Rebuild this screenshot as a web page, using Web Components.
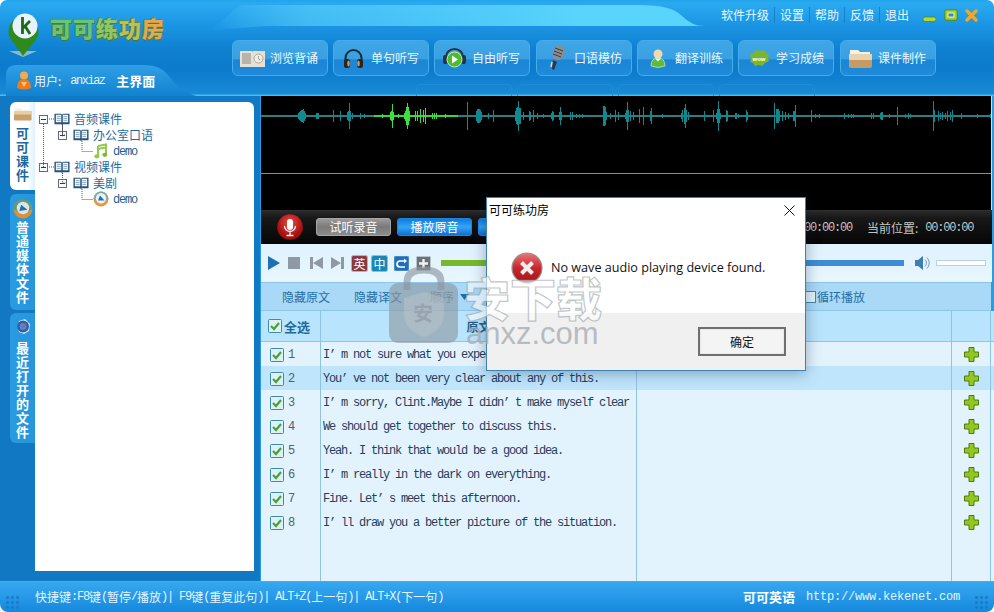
<!DOCTYPE html>
<html lang="zh"><head><meta charset="utf-8"><title>可可练功房</title>
<style>
html,body{margin:0;padding:0;background:#fff}
body{font:12px "Noto Sans CJK SC","Liberation Sans",sans-serif}
</style></head><body>
<kk-app></kk-app>
<script>
const ICONS={
 book:`<svg width="17" height="14" viewBox="0 0 17 14"><path d="M0.5 1.5h7l1 1 1-1h7v11h-7l-1 1-1-1h-7z" fill="#27527c"/><path d="M2 2.5h5.7v8H2zM9.3 2.5H15v8H9.3z" fill="#eef6fb"/><path d="M3 4.5h4M3 6.5h4M3 8.5h4M10 4.5h4M10 6.5h4M10 8.5h4" stroke="#8fa8bc" stroke-width="1"/></svg>`,
 minus:`<svg width="9" height="9" viewBox="0 0 9 9"><rect x=".5" y=".5" width="8" height="8" fill="#f8fbfe" stroke="#5f6e7c"/><path d="M2 4.5h5" stroke="#2c3a46"/></svg>`,
 note:`<svg width="14" height="16" viewBox="0 0 14 16"><path d="M4 3V13M12 1.5V11.500M4 3l8-1.500V4.500L4 6" fill="none" stroke="#93c94a" stroke-width="2"/><ellipse cx="2.800" cy="13.300" rx="2.500" ry="2.100" fill="#93c94a"/><ellipse cx="10.800" cy="11.800" rx="2.500" ry="2.100" fill="#7fb83a"/></svg>`,
 orb:`<svg width="16" height="16" viewBox="0 0 16 16"><circle cx="8" cy="8" r="7.500" fill="#e59a3a"/><path d="M.6 8a7.400 7.400 0 0 1 14.800 0 9 6 0 0 1-14.800 0" fill="#7ea9a8"/><circle cx="8" cy="7.200" r="5.200" fill="#e9f2f6"/><path d="M5 9.500 7 4.500l4.500 5z" fill="#2b6ea6"/></svg>`,
 orbBig:`<svg width="20" height="20" viewBox="0 0 16 16"><circle cx="8" cy="8" r="7.500" fill="#df8f34"/><path d="M.6 8a7.400 7.400 0 0 1 14.800 0 9 6 0 0 1-14.800 0" fill="#5f9d6e"/><circle cx="8" cy="7.200" r="5" fill="#d7e6ee"/><path d="M5 9.500 6.500 4.500l5 4z" fill="#2b6ea6"/></svg>`,
 clock:`<svg width="18" height="18" viewBox="0 0 18 18"><path d="M3 9l2-6 6-2 5 5-1 7-5 3-5-2z" fill="#dbe6f2"/><circle cx="9" cy="8.500" r="6" fill="#2c5fa8"/><circle cx="9" cy="8.500" r="3.500" fill="#5a86c6"/><path d="M9 8.500l3-3" stroke="#e04a3a" stroke-width="1.200"/></svg>`,
 folder:`<svg width="18" height="14" viewBox="0 0 18 14"><path d="M1 3V1.500h6l1.500 1.500h7V5H1z" fill="#f4efe4"/><path d="M0 4h17.500v8.500q0 1-1 1H1q-1 0-1-1z" fill="#c9a06a"/><path d="M0 4h17.500v3.500H0z" fill="#e7cfa5"/></svg>`,
 user:`<svg width="14" height="19" viewBox="0 0 14 19"><circle cx="7" cy="4.500" r="4" fill="#f6a94a"/><path d="M0 17q0-9 7-9t7 9q-7 3-14 0" fill="#ec7d1e"/><path d="M4 11h6l-3 5z" fill="#f9c27a"/></svg>`,
 logo:`<svg width="32" height="48" viewBox="0 0 32 48"><path d="M1 41h28l-14 6z" fill="#8bb7c9"/><path d="M15 46 5 32a15 15 0 1 1 21 0z" fill="#2e8a1d"/><circle cx="17" cy="16" r="12.500" fill="#e6f3fb"/><path d="M14.500 7v17M15 18l7-7M17 16l5 8" stroke="#1c6b14" stroke-width="2.800" fill="none"/></svg>`,
 nbook:`<svg width="25" height="17" viewBox="0 0 25 17"><path d="M0 1h12l.5 1 .5-1h12v16H0z" fill="#e6e1d6"/><path d="M2 3h9v11H2z" fill="#b8b4aa"/><circle cx="18.500" cy="8.500" r="4.500" fill="#f2eee6" stroke="#a9a599"/><path d="M18.500 6v3l2 1" stroke="#a9a599" fill="none"/></svg>`,
 phones:`<svg width="21" height="21" viewBox="0 0 21 21"><path d="M2.500 13V10a8 8 0 0 1 16 0v3" fill="none" stroke="#1c2a36" stroke-width="2"/><rect x="1" y="11" width="6" height="9" rx="2.500" fill="#20262c"/><rect x="14" y="11" width="6" height="9" rx="2.500" fill="#20262c"/><ellipse cx="5.500" cy="15.500" rx="1.300" ry="3" fill="#e8913a"/><ellipse cx="15.500" cy="15.500" rx="1.300" ry="3" fill="#e8913a"/></svg>`,
 greenset:`<svg width="23" height="20" viewBox="0 0 23 20"><path d="M3 11V9a8.500 8 0 0 1 17 0v2" fill="none" stroke="#24343c" stroke-width="2"/><rect x="0" y="7" width="5" height="9" rx="2" fill="#26363e"/><rect x="18" y="7" width="5" height="9" rx="2" fill="#26363e"/><circle cx="11.500" cy="11.500" r="7.500" fill="#4dbb2f" stroke="#cfe9c4"/><path d="M9 7.500v8l6-4z" fill="#fff"/></svg>`,
 mic:`<svg width="19" height="26" viewBox="0 0 19 26"><rect x="6" y="0" width="11" height="15" rx="5.500" transform="rotate(18 11 8)" fill="#8b8d90"/><path d="M8 3l8 3M7 6l8 3M6 9l8 3" stroke="#3a3c40"/><path d="M6 15l4 2-3 8-2-1z" fill="#33363a"/><path d="M5 17l-1 5" stroke="#d5d8da" stroke-width="1.500"/></svg>`,
 person:`<svg width="16" height="19" viewBox="0 0 16 19"><circle cx="8" cy="5" r="4.500" fill="#efd9b2"/><path d="M1 17q0-8 7-8t7 8q-7 3-14 0" fill="#5dbb3a" stroke="#e9f2d8" stroke-width=".6"/><path d="M5 9.500h6l-3 3z" fill="#fff"/></svg>`,
 wow:`<svg width="22" height="18" viewBox="0 0 22 18"><path d="M2 5l4-1 2-3 4 1 4-1 2 3 3 2-1 3 1 3-4 2-3 3-3-1-4 1-2-3-3-1 1-3z" fill="#7db52a"/><text x="11" y="11.500" text-anchor="middle" font-family="Liberation Sans" font-weight="700" font-size="6" fill="#fff">wow</text></svg>`,
 nfolder:`<svg width="23" height="19" viewBox="0 0 23 19"><path d="M1 5V1h8l2 2h10v4H1z" fill="#f4f1e8"/><path d="M0 5h23v12q0 2-2 2H2q-2 0-2-2z" fill="#c59a64"/><path d="M0 5h23v6H0z" fill="#e8d1ac"/></svg>`,
 check:`<svg width="14" height="14" viewBox="0 0 14 14"><rect x=".5" y=".5" width="13" height="13" rx="1" fill="#dff0f5" stroke="#3d8ba6"/><path d="M3 7l3 3 5-6" fill="none" stroke="#46a33a" stroke-width="2.200"/></svg>`,
 plus:`<svg width="15" height="15" viewBox="0 0 15 15"><path d="M5 .5h5v4.500h4.500v5H10v4.500H5V10H.5V5H5z" fill="#93c81f" stroke="#4f7a10"/></svg>`,
 play:`<svg width="12" height="14" viewBox="0 0 12 14"><path d="M0 0l12 7-12 7z" fill="#1f6fb8"/></svg>`,
 stop:`<svg width="12" height="12" viewBox="0 0 12 12"><rect width="12" height="12" fill="#8e99a3"/></svg>`,
 prev:`<svg width="13" height="12" viewBox="0 0 13 12"><path d="M0 0h3v12H0zM13 0v12L3 6z" fill="#8e99a3"/></svg>`,
 next:`<svg width="13" height="12" viewBox="0 0 13 12"><path d="M10 0h3v12h-3zM0 0v12l10-6z" fill="#8e99a3"/></svg>`,
 vol:`<svg width="15" height="14" viewBox="0 0 15 14"><path d="M0 4h3l5-4v14l-5-4H0z" fill="#3d7fb4"/><path d="M10 3.500a5 5 0 0 1 0 7M12 1.500a8 8 0 0 1 0 11" fill="none" stroke="#7a9cb8"/></svg>`,
 loop:`<svg width="15" height="15" viewBox="0 0 15 15"><rect width="15" height="15" rx="2" fill="#1f6fb8" stroke="#6ba5d0"/><path d="M11 5H6a2.500 2.500 0 0 0 0 6h5" fill="none" stroke="#fff" stroke-width="1.700"/><path d="M10 2.500l3 2.500-3 2.500z" fill="#fff"/></svg>`,
 add:`<svg width="15" height="15" viewBox="0 0 15 15"><rect x=".5" y=".5" width="14" height="14" rx="1" fill="#6b7276" stroke="#b9c4ca"/><path d="M7.500 3v9M3 7.500h9" stroke="#eef2f4" stroke-width="2.400"/></svg>`,
 micRed:`<svg width="26" height="26" viewBox="0 0 26 26"><defs><radialGradient id="r" cx=".5" cy=".35"><stop offset="0" stop-color="#f0504a"/><stop offset="1" stop-color="#a80e10"/></radialGradient></defs><circle cx="13" cy="13" r="12.800" fill="url(#r)"/><rect x="10" y="5" width="6" height="11" rx="3" fill="#fff"/><path d="M7.500 12a5.500 5.500 0 0 0 11 0M13 18v3M9.500 21.500h7" fill="none" stroke="#fff" stroke-width="1.300"/></svg>`,
 err:`<svg width="32" height="32" viewBox="0 0 32 32"><defs><linearGradient id="e" x1="0" y1="0" x2="0" y2="1"><stop offset="0" stop-color="#e8777a"/><stop offset=".5" stop-color="#c8262c"/><stop offset="1" stop-color="#a3161b"/></linearGradient></defs><circle cx="16" cy="16" r="15" fill="url(#e)" stroke="#9c8f90" stroke-width="1.200"/><path d="M10.500 10.500l11 11M21.500 10.500l-11 11" stroke="#f3eeee" stroke-width="4"/></svg>`,
 x:`<svg width="11" height="11" viewBox="0 0 11 11"><path d="M.5.500l10 10M10.500.500l-10 10" stroke="#111" stroke-width="1"/></svg>`,
 wmin:`<svg width="14" height="14" viewBox="0 0 14 14"><rect x="1" y="9" width="13" height="4.500" rx="2" fill="#b7d92a" stroke="#4d8a12" stroke-width=".8"/></svg>`,
 wmax:`<svg width="14" height="14" viewBox="0 0 14 14"><rect x=".8" y="1.800" width="12.400" height="10.400" rx="2" fill="#a8d028" stroke="#4d8a12"/><rect x="4" y="5" width="6" height="4" fill="#2a8ad2" stroke="#e9f4b8"/></svg>`,
 wx:`<svg width="13" height="13" viewBox="0 0 13 13"><path d="M2 2l9 9M11 2l-9 9" stroke="#f0a92a" stroke-width="3.200" stroke-linecap="round"/></svg>`
};
const def=(n,c)=>customElements.define(n,c);
class Base extends HTMLElement{
 connectedCallback(){ if(this.shadowRoot) return; const s=this.attachShadow({mode:'open'}); s.innerHTML=`<style>${this.css()}</style>${this.html()}`; }
 css(){return ':host{display:block}'} html(){return '<slot></slot>'}
}
def('kk-icon',class extends Base{
 css(){return ':host{display:inline-flex;align-items:center;justify-content:center;line-height:0}'}
 html(){return ICONS[this.getAttribute('name')]||''}
});
def('kk-navbtn',class extends Base{
 css(){return `:host{display:grid;grid-template-columns:37px auto;align-items:center;width:94px;height:34px;border:1px solid #42aeea;border-radius:6px;
  background:linear-gradient(#3fa6e6 0,#3aa0e2 52%,#1c86d6 56%,#1f8ada 100%);color:#eaf7ff;font-size:12px;line-height:16px;white-space:nowrap}
  .i{display:flex;justify-content:center;padding-left:2px}`}
 html(){return `<span class="i"><kk-icon name="${this.getAttribute('icon')}"></kk-icon></span><span><slot></slot></span>`}
});
def('kk-header',class extends Base{
 css(){return `:host{display:grid;grid-template-columns:232px 1fr;height:96px;position:relative;box-sizing:border-box;overflow:hidden;border-radius:7px 7px 0 0;
  background:linear-gradient(#22a4ea 0,#2aaaf0 3px,#1d98e6 22px,#0f80d0 50px,#0d7acb 70px,#1a8ad6 94px,#3cc3f2 95px)}
  .sw{position:absolute;left:0;top:0;pointer-events:none}
  .left{display:flex;flex-direction:column;justify-content:space-between;position:relative}
  .logo{display:flex;align-items:flex-start;padding:10px 0 0 8px}
  .title{margin:2px 0 0 10px;font:900 22px/30px "Noto Sans CJK SC",sans-serif;letter-spacing:1px;text-shadow:1px 1px 0 #4d7a3a,-1px 0 0 #5d8a4a,0 -1px 0 #5d8a4a}
  .title b:nth-child(1),.title b:nth-child(2){color:#62c878}.title b:nth-child(3){color:#8cc868}.title b:nth-child(4){color:#bcc05a}.title b:nth-child(5){color:#e4a850}
  .tab{display:flex;align-items:center;height:31px;position:relative;padding-left:17px;color:#eaf7ff}
  .tab svg.bg{position:absolute;left:0;top:0}
  .tab>*:not(.bg){position:relative}
  .u{margin-left:3px}.n{font:12px "Liberation Mono",monospace;letter-spacing:-1.500px;margin-left:9px;width:46px;color:#e0f2ff;padding-top:1px}
  .m{font-weight:700;font-size:13px;color:#fff}
  .right{display:flex;flex-direction:column;position:relative}
  .menu{display:flex;align-items:center;justify-content:flex-end;height:30px;padding-right:16px;color:#e9f7ff;font-size:12px;line-height:16px}
  .menu a{padding:0 5px;border-right:1px solid #1a80cc}
  .menu a:last-of-type{border:0}
  .menu kk-icon{margin-left:8px}
  .menu kk-icon:last-child{margin-left:7px}
  .nav{display:flex;gap:5px;margin-top:10px}
  .nav :nth-child(4),.nav :last-child{margin-left:1px}
  .ghost{display:flex;gap:5px;position:absolute;left:184px;top:84px}
  .ghost i{display:block;width:94px;height:12px;border:1px solid #1f8cd8;border-bottom:0;border-radius:5px 5px 0 0}`}
 html(){return `
 <svg class="sw" width="994" height="96" viewBox="0 0 994 96"><defs><linearGradient id="g" gradientUnits="userSpaceOnUse" x1="210" y1="0" x2="704" y2="0"><stop offset="0" stop-color="#5fd4ff" stop-opacity="0"/><stop offset=".2" stop-color="#52caf9" stop-opacity=".7"/><stop offset=".75" stop-color="#58d4fd"/></linearGradient></defs>
 <path d="M210 30Q240 28 265 26H704Q692 26 682 16 672 5 640 5H240Z" fill="url(#g)"/></svg>
 <div class="left">
  <div class="logo"><kk-icon name="logo"></kk-icon><div class="title"><b>可</b><b>可</b><b>练</b><b>功</b><b>房</b></div></div>
  <div class="tab"><svg class="bg" width="232" height="31" viewBox="0 0 232 31"><defs><linearGradient id="t" x1="0" y1="0" x2="0" y2="1"><stop offset="0" stop-color="#2f9fe6"/><stop offset="1" stop-color="#1182cf"/></linearGradient></defs><path d="M6 31V10Q6 0 16 0H146Q160 0 168 10 180 27 196 31Z" fill="url(#t)"/></svg>
   <kk-icon name="user"></kk-icon><span class="u">用户:</span><span class="n">anxiaz</span><span class="m">主界面</span></div>
 </div>
 <div class="right">
  <div class="menu"><a>软件升级</a><a>设置</a><a>帮助</a><a>反馈</a><a>退出</a><kk-icon name="wmin"></kk-icon><kk-icon name="wmax"></kk-icon><kk-icon name="wx"></kk-icon></div>
  <div class="nav">
  <kk-navbtn icon="nbook">浏览背诵</kk-navbtn><kk-navbtn icon="phones">单句听写</kk-navbtn><kk-navbtn icon="greenset">自由听写</kk-navbtn><kk-navbtn icon="mic">口语模仿</kk-navbtn><kk-navbtn icon="person">翻译训练</kk-navbtn><kk-navbtn icon="wow">学习成绩</kk-navbtn><kk-navbtn icon="nfolder">课件制作</kk-navbtn>
  </div>
  <div class="ghost"><i></i><i></i><i></i><i></i></div>
 </div>`}
});
def('kk-sidetab',class extends Base{
 css(){return `:host{display:flex;flex-direction:column;align-items:center;width:25px;box-sizing:border-box;border-radius:6px 0 0 6px;background:linear-gradient(90deg,#2b9be0,#2596dc);color:#fff;font:700 13px/14px "Noto Sans CJK SC",sans-serif;padding-top:5px}
  :host([active]){background:linear-gradient(90deg,#fff 70%,#dff0fc);color:#1c6a9e}
  .t{width:14px;text-align:center;margin-top:var(--gap,6px)}`}
 html(){return `<kk-icon name="${this.getAttribute('icon')}"></kk-icon><div class="t"><slot></slot></div>`}
});
def('kk-tree-row',class extends Base{
 css(){return `:host{display:flex;align-items:center;height:16px;color:#1f6b9c;font-size:12px;line-height:16px;white-space:nowrap}
  kk-icon.b{width:9px;margin-right:6px}kk-icon.k{width:16px;margin-right:4px}
  .demo{font:12px "Liberation Mono",monospace;letter-spacing:-1.200px;margin-left:4px;color:#1f5f8c;padding-top:2px}`}
 html(){const l=this.getAttribute('leaf');
  return l?`<kk-icon name="${l}" style="width:16px"></kk-icon><span class="demo"><slot></slot></span>`:
  `<kk-icon class="b" name="minus"></kk-icon><kk-icon class="k" name="book"></kk-icon><slot></slot>`}
});
def('kk-tree',class extends Base{
 css(){return `:host{display:block;position:relative;padding:9px 0 0 4px}
  svg{position:absolute;left:0;top:0}
  kk-tree-row{position:relative}`}
 html(){return `<svg width="110" height="110" viewBox="0 0 110 110"><path d="M8.500 22V65M27.500 22V34H27M14 17h5M27 33h5M47 37V49.500H58M14 65h5M27.500 71V81H32M47 85V97.500H58M27.500 23V33" fill="none" stroke="#556" stroke-width="1" stroke-dasharray="1 1"/></svg><slot></slot>`}
});
def('kk-sidebar',class extends Base{
 css(){return `:host{display:grid;grid-template-columns:25px 219px;padding:6px 0 10px 10px;width:260px;box-sizing:border-box;background:#1179c4}
  .tabs{display:flex;flex-direction:column;gap:4px}
  .panel{background:#fff;border-radius:0 6px 0 0;height:469px}`}
 html(){return `<div class="tabs">
  <kk-sidetab active icon="folder" style="height:88px;--gap:5px">可可课件</kk-sidetab>
  <kk-sidetab icon="orbBig" style="height:116px;--gap:1px;margin-bottom:-1px">普通媒体文件</kk-sidetab>
  <kk-sidetab icon="clock" style="height:130px;--gap:5px">最近打开的文件</kk-sidetab></div>
  <div class="panel"><kk-tree>
   <kk-tree-row>音频课件</kk-tree-row>
   <kk-tree-row style="padding-left:19px">办公室口语</kk-tree-row>
   <kk-tree-row leaf="note" style="padding-left:54px">demo</kk-tree-row>
   <kk-tree-row>视频课件</kk-tree-row>
   <kk-tree-row style="padding-left:19px">美剧</kk-tree-row>
   <kk-tree-row leaf="orb" style="padding-left:54px">demo</kk-tree-row>
  </kk-tree></div>`}
});
def('kk-wave',class extends Base{
 css(){return `:host{display:block;height:114px;background:#000;line-height:0;border-right:1px solid #bde3f7;margin-right:2px}`}
 html(){
  const sp=[[298,3],[299,4],[300,5],[301,6],[302,6],[303,7],[304,5],[305,3],[316,3],[317,3],[318,3],[333,6],[340,5],[347,4],[348,5],[349,13],[350,5],[352,3],[360,3],[364,2],
   [382,2],[390,4],[391,5],[392,12],[393,4],[398,2],[404,3],[405,5],[406,9],[407,13],[408,9],[409,5],[415,5],[417,5],[420,7],[423,6],[425,8],[432,3],[434,3],[436,3],[445,2],
   [467,14],[476,5],[477,7],[478,7],[479,7],[480,6],[481,4],[488,3],[493,6],
   [515,5],[516,8],[517,9],[518,15],[519,8],[520,8],[523,4],[529,5],[530,4],[533,6],[537,3],[543,2],[551,3],[552,5],[553,4],[559,4],[560,9],[561,4],[570,4],[572,4],[576,2],[579,2],[582,2],
   [603,10],[604,10],[605,9],[606,4],[610,3],[615,6],[618,4],[625,3],[626,6],[627,14],[628,6],[630,5],[633,4],[639,7],[643,9],[650,5],[651,8],[662,2],
   [681,3],[682,6],[684,8],[685,12],[686,6],[688,4],[704,5],[713,6],[716,3],[717,7],[718,15],[719,7],[720,3],[726,6],[727,5],[735,3],[736,3],[738,2],[746,6],[747,4],
   [774,13],[776,7],[777,7],[778,7],[779,5],[782,5],[785,4],[788,3],[793,5],[794,5],[795,11],[811,6],[815,2],[819,2],
   [844,3],[848,2],[851,2],[853,2],[871,3],[873,3],[880,3],[881,4],[882,4],[889,2],[897,9],[905,2],[908,3],[910,2],
   [933,15],[934,6],[938,5],[940,3],[942,4],[945,3],[947,5],[950,4],[952,6],[961,3],[970,1],[973,1],[977,2],[985,1],[990,2]];
  let t='',g='';
  for(const[x,a]of sp){const d=`M${x-261+.5} ${20-a}V${20+a}`; if(x>=374&&x<458)g+=d; else t+=d;}
  return `<svg width="730" height="114" viewBox="0 0 730 114"><path d="M0 20H113M197 20H730" stroke="#2b7f80" stroke-width="2"/><path d="${t}" stroke="#108a90" stroke-width="1"/><path d="M113 20H197" stroke="#38d83c" stroke-width="2"/><path d="${g}" stroke="#3ae03e" stroke-width="1"/><path d="M0 77.500H730" stroke="#45bd48"/></svg>`}
});
def('kk-pill',class extends Base{
 css(){return `:host{display:flex;align-items:center;justify-content:center;width:75px;height:18px;box-sizing:border-box;border-radius:3px;font-size:12px;line-height:16px;color:#fff;
  background:linear-gradient(#0f7ce0,#36a4f5 50%,#0f6fd0);border:1px solid #1c85e0}
  :host([gray]){background:linear-gradient(#9a9a9a,#7a7a7a 50%,#8c8c8c);border-color:#a6a6a6}`}
});
def('kk-control',class extends Base{
 css(){return `:host{display:flex;align-items:center;height:34px;box-sizing:border-box;padding-left:16px;margin-right:2px;background:linear-gradient(#333 0,#2a2a2a 1px,#181818 8px,#050505 100%);color:#c4c4c4;font-size:12px}
  kk-pill{margin-left:6px}kk-pill:first-of-type{margin-left:13px}
  .t{font:12px "Liberation Mono",monospace;letter-spacing:-1.200px;color:#c4c4c4;padding-top:2px}
  .t1{margin-left:251px}.l{margin-left:15px}`}
 html(){return `<kk-icon name="micRed"></kk-icon><kk-pill gray>试听录音</kk-pill><kk-pill>播放原音</kk-pill><kk-pill></kk-pill><span class="t t1">00:00:00</span><span class="l">当前位置:</span><span class="t" style="margin-left:7px">00:00:00</span>`}
});
def('kk-transport',class extends Base{
 css(){return `:host{display:flex;align-items:center;height:38px;box-sizing:border-box;padding-left:7px;background:linear-gradient(#dff2fe,#e8f6ff)}
  kk-icon{flex:none}
  .sq{display:inline-flex;align-items:center;justify-content:center;width:15px;height:15px;font-size:12px;line-height:15px;color:#fff;border-radius:1px;box-sizing:border-box}
  .bar{height:6px;width:463px;margin-left:10px;background:linear-gradient(90deg,#78b92a 0 45%,#3d8dd6 45%)}
  .vs{width:50px;height:6px;border:1px solid #b5d4e2;background:#fff;box-sizing:border-box;margin-left:6px}`}
 html(){return `<kk-icon name="play"></kk-icon><kk-icon name="stop" style="margin-left:8px"></kk-icon><kk-icon name="prev" style="margin-left:10px"></kk-icon><kk-icon name="next" style="margin-left:8px"></kk-icon>
 <span class="sq" style="margin-left:8px;background:#8a3a3e;outline:1px solid #caa">英</span><span class="sq" style="margin-left:5px;background:#1688b4;outline:1px solid #7cc">中</span><kk-icon name="loop" style="margin-left:7px"></kk-icon><kk-icon name="add" style="margin-left:7px"></kk-icon>
 <div class="bar"></div><kk-icon name="vol" style="margin-left:11px"></kk-icon><div class="vs"></div>`}
});
def('kk-options',class extends Base{
 css(){return `:host{display:flex;align-items:center;height:29px;box-sizing:border-box;border-top:1px solid #8cc6ea;border-bottom:1px solid #8fc6e6;background:#a9d9f7;color:#1f6ea6;font-size:12px;line-height:16px;padding-left:21px;margin-right:3px}
  .c{width:10px;height:10px;border:1px solid #3d8ba6;background:#e3f3fb;margin-left:0}`}
 html(){return `<span>隐藏原文</span><span style="margin-left:24px">隐藏译文</span><span style="margin-left:28px;color:#5b86a4">顺序</span><svg width="9" height="6" style="margin-left:6px"><path d="M0 0h9L4.500 6z" fill="#1f6ea6"/></svg><span class="c" style="margin-left:335px"></span><span style="margin-left:1px">循环播放</span>`}
});
def('kk-row',class extends Base{
 css(){return `:host{display:grid;grid-template-columns:60px 316px 315px 39px;height:24px;background:#e2f3fe;color:#24405c}
  :host([hl]){background:#bfe5fc}
  :host([head]){height:30px;background:#b9e4fd;border-bottom:1px solid #8fc6e2;color:#1f6a9c;font-weight:700}
  :host([fill]){height:auto;flex:1}
  .c{border-right:1px solid #8fc4e0;display:flex;align-items:center;overflow:hidden;white-space:nowrap}
  .s{padding:1px 0 0 9px;font:12px "Liberation Mono",monospace;letter-spacing:-1px;color:#506070}
  :host([head]) .s{padding:0 0 0 7px;font:700 13px "Noto Sans CJK SC",sans-serif;letter-spacing:0;color:#1f6a9c}
  .s kk-icon{margin-right:4px}
  :host([head]) .s kk-icon{margin-right:2px}
  .e{padding:2px 0 0 2px;font:12px "Liberation Mono",monospace;letter-spacing:-1.200px}
  :host([head]) .e{justify-content:center;padding:0;font:700 12px "Noto Sans CJK SC",sans-serif;letter-spacing:0;color:#1f5f8c}
  .p{justify-content:center}`}
 html(){ const h=this.hasAttribute('head'),f=this.hasAttribute('fill'),n=this.getAttribute('n')||'';
  if(f) return `<div class="c"></div><div class="c"></div><div class="c"></div><div class="c"></div>`;
  if(h) return `<div class="c s"><kk-icon name="check"></kk-icon>全选</div><div class="c e">原文</div><div class="c e">译文</div><div class="c"></div>`;
  return `<div class="c s"><kk-icon name="check"></kk-icon>${n}</div><div class="c e"><slot></slot></div><div class="c"></div><div class="c p"><kk-icon name="plus"></kk-icon></div>`}
});
def('kk-table',class extends Base{
 css(){return `:host{display:flex;flex-direction:column;flex:1;min-height:0}`}
 html(){return `<kk-row head></kk-row><slot></slot><kk-row fill></kk-row>`}
});
def('kk-status',class extends Base{
 css(){return `:host{display:flex;align-items:center;height:31px;box-sizing:border-box;padding:0 34px 1px 35px;border-top:1px solid #3cb0ea;border-radius:0 0 8px 8px;background:linear-gradient(#35a8ee,#2a9cea 40%,#1688dc);color:#e2f5ff;font-size:12px;line-height:16px;white-space:nowrap;position:relative}
  .l{font:12px "Liberation Mono",monospace;letter-spacing:-1.200px}
  .sp{flex:1}
  b{font-size:13px;color:#fff}
  .u{font:12px "Liberation Mono",monospace;letter-spacing:-.200px;margin-left:11px}
  .d{position:absolute;bottom:3px;width:14px;height:14px;background:radial-gradient(circle,#1a7cc8 1.300px,transparent 1.600px) 0 0/5px 5px}`}
 html(){return `<span class="d" style="left:5px"></span><span class="d" style="right:6px"></span>快捷键<span class="l">:F8</span>键<span class="l">(</span>暂停<span class="l">/</span>播放<span class="l">)| F9</span>键<span class="l">(</span>重复此句<span class="l">)| ALT+Z(</span>上一句<span class="l">)| ALT+X(</span>下一句<span class="l">)</span><span class="sp"></span><b>可可英语</b><span class="u">http://www.kekenet.com</span>`}
});
def('kk-dialog',class extends Base{
 css(){return `:host{position:absolute;left:486px;top:197px;width:320px;height:174px;box-sizing:border-box;border:1px solid #3e82b4;background:#fff;box-shadow:0 2px 14px rgba(0,30,60,.35);display:flex;flex-direction:column;color:#000}
  .h{display:flex;justify-content:space-between;align-items:center;height:24px;padding:0 10px 0 2px;font-size:12px;line-height:24px}
  .b{flex:1;display:flex;align-items:center;padding-left:24px;gap:8px;font:12.600px "Open Sans","Noto Sans",sans-serif;color:#111}
  .f{height:56px;background:#f0f0f0;display:flex;justify-content:flex-end;align-items:center;padding:0 19px 1px 0}
  button{width:88px;height:29px;border:2px solid #6f6f6f;background:#f4f4f4;font:12px "Noto Sans CJK SC",sans-serif;color:#111;padding:0;box-shadow:inset 0 0 0 1px #e8e8e8}`}
 html(){return `<div class="h"><span>可可练功房</span><kk-icon name="x"></kk-icon></div><div class="b"><kk-icon name="err"></kk-icon><span>No wave audio playing device found.</span></div><div class="f"><button>确定</button></div>`}
});
def('kk-watermark',class extends Base{
 css(){return `:host{position:absolute;left:380px;top:260px;width:240px;height:95px;pointer-events:none}
  svg{position:absolute;left:0;top:0}
  .a{position:absolute;left:84px;top:8px;font:900 46px/56px "Noto Sans CJK SC",sans-serif;color:rgba(255,255,255,.6);-webkit-text-stroke:1.200px rgba(150,158,166,.6);white-space:nowrap}
  .b{position:absolute;left:86px;top:56px;font:31px/36px "Liberation Sans",sans-serif;color:rgba(165,170,176,.75);white-space:nowrap}
  .s{position:absolute;left:33px;top:41px;font:700 20px/24px "Noto Sans CJK SC",sans-serif;color:rgba(150,160,170,.85)}`}
 html(){return `<svg width="90" height="90" viewBox="0 0 90 90"><path d="M27 30V22Q27 10 44 10 61 10 61 22V30" fill="none" stroke="rgba(140,150,160,.65)" stroke-width="7"/><rect x="9" y="23" width="69" height="60" rx="9" fill="rgba(140,150,160,.62)"/><path d="M44 32l20 6v17q0 14-20 22-20-8-20-22V38z" fill="rgba(190,198,205,.45)"/></svg><span class="s">安</span><span class="a">安下载</span><span class="b">anxz.com</span>`}
});
def('kk-app',class extends Base{
 css(){return `:host{display:grid;grid-template-rows:96px 485px 31px;width:994px;height:612px;position:relative;overflow:hidden;font:12px "Noto Sans CJK SC","Liberation Sans",sans-serif}
  .main{display:grid;grid-template-columns:260px 1fr;background:#1179c4;min-height:0}
  .r{display:flex;flex-direction:column;padding-left:1px;background:#2a9ce2;min-height:0}
  kk-transport{margin-right:2px}`}
 html(){return `<kk-header></kk-header><div class="main"><kk-sidebar></kk-sidebar><div class="r"><kk-wave></kk-wave><kk-control></kk-control><kk-transport></kk-transport><kk-options></kk-options>
 <kk-table>
  <kk-row n="1">I’ m not sure what you expect from me.</kk-row>
  <kk-row n="2" hl>You’ ve not been very clear about any of this.</kk-row>
  <kk-row n="3">I’ m sorry, Clint.Maybe I didn’ t make myself clear</kk-row>
  <kk-row n="4">We should get together to discuss this.</kk-row>
  <kk-row n="5">Yeah. I think that would be a good idea.</kk-row>
  <kk-row n="6">I’ m really in the dark on everything.</kk-row>
  <kk-row n="7">Fine. Let’ s meet this afternoon.</kk-row>
  <kk-row n="8">I’ ll draw you a better picture of the situation.</kk-row>
 </kk-table></div></div><kk-status></kk-status><kk-dialog></kk-dialog><kk-watermark></kk-watermark>`}
});
</script>
</body></html>
